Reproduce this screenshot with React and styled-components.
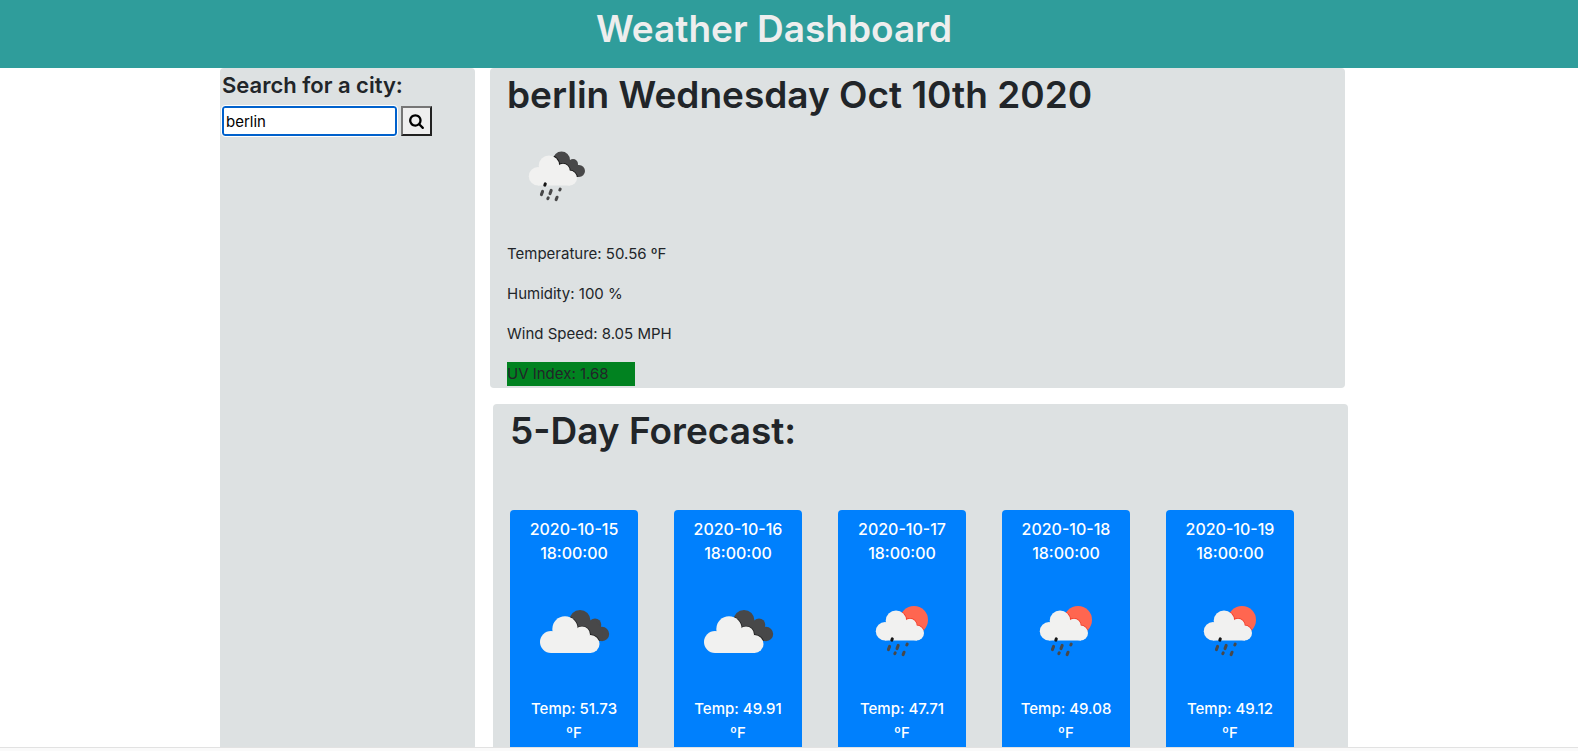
import React, { useState } from "react";
import styled, { createGlobalStyle } from "styled-components";

const colors = {
  teal: "#2f9d9b",
  panel: "#dde1e2",
  ink: "#212529",
  blue: "#0080fd",
  green: "#018220",
  cloud: "#f1f1f0",
  storm: "#484849",
  sun: "#ff6650",
};

const GlobalStyle = createGlobalStyle`
  *, *::before, *::after { box-sizing: border-box; }
  body {
    margin: 0;
    background: #fff;
    color: ${colors.ink};
    font: 400 15px/24px Inter, "Liberation Sans", sans-serif;
  }
  h1, h2, h3, p { margin: 0; }
`;

const Page = styled.div`
  display: flex;
  flex-direction: column;
  height: 100vh;
`;

const Header = styled.header`
  flex: none;
  height: 68px;
  padding: 4px 30px 0 0;
  background: ${colors.teal};
  color: #eee;
  text-align: center;
`;

const Title = styled.h1`
  font-size: 37px;
  font-weight: 600;
  line-height: 50px;
`;

const Content = styled.div`
  flex: 1;
  min-height: 0;
  width: 100%;
  max-width: 1138px;
  margin: 0 auto;
  display: grid;
  grid-template-columns: 255px minmax(0, 858px);
  gap: 15px;
  overflow: hidden;
`;

const Sidebar = styled.aside`
  padding: 2px;
  background: ${colors.panel};
  border-radius: 4px 4px 0 0;
`;

const SearchLabel = styled.label`
  display: block;
  margin-bottom: 6px;
  font-size: 22px;
  font-weight: 600;
  line-height: 30px;
`;

const SearchForm = styled.form`
  display: flex;
  gap: 4px;
`;

const SearchInput = styled.input`
  width: 175px;
  height: 30px;
  padding: 0 2px;
  border: 2px solid #0061cc;
  border-radius: 3px;
  outline: 1px solid #fff;
  background: #fff;
  color: #000;
  font: inherit;
`;

const SearchButton = styled.button`
  display: grid;
  place-items: center;
  width: 31px;
  height: 30px;
  padding: 0;
  border: 2px solid;
  border-color: #767676 #212121 #212121 #767676;
  background: #efefef;
  color: #000;
`;

const Main = styled.main`
  display: flex;
  flex-direction: column;
  gap: 16px;
  min-height: 0;
`;

const Panel = styled.section`
  padding: 2px 17px;
  background: ${colors.panel};
  border-radius: 4px;
`;

const CurrentPanel = styled(Panel)`
  margin-right: 3px;
`;

const ForecastPanel = styled(Panel)`
  display: flex;
  flex: 1;
  flex-direction: column;
  margin-left: 3px;
  padding-bottom: 0;
  border-radius: 4px 4px 0 0;
`;

const PanelTitle = styled.h2`
  margin-bottom: 6px;
  font-size: 37px;
  font-weight: 600;
  line-height: 50px;
`;

const Reading = styled.p`
  margin-top: 16px;
`;

const UvReading = styled(Reading)`
  width: 128px;
  background: ${colors.green};
`;

const Days = styled.div`
  display: grid;
  flex: 1;
  grid-template-columns: repeat(5, 128px);
  gap: 36px;
  margin-top: 48px;
`;

const DayCard = styled.article`
  padding: 7px 14px 0;
  border-radius: 4px 4px 0 0;
  background: ${colors.blue};
  color: #fff;
  text-align: center;
`;

const DayTitle = styled.h3`
  margin-bottom: 16px;
  font-size: 16px;
  font-weight: 500;
  line-height: 24px;
`;

const DayTemp = styled(Reading)`
  font-weight: 500;
`;

const Picture = styled.svg`
  display: block;
  width: 100px;
  height: 100px;
`;

const StatusBar = styled.div`
  flex: none;
  height: 4px;
  border-top: 1px solid #e2e2e2;
  background: #fafafa;
`;

function SmallCloud() {
  return (
    <>
      <circle cx="33" cy="50.3" r="9.2" />
      <circle cx="44" cy="39.7" r="10.3" />
      <circle cx="58" cy="44.5" r="6.7" />
      <circle cx="64.5" cy="52" r="7.5" />
      <path d="M33 44h26l6 8v7.5H33z" />
    </>
  );
}

function Drops() {
  return (
    <g stroke={colors.storm} strokeWidth="3" strokeLinecap="round">
      <path d="M40.3 57.8l-.5 1.4" stroke="#151515" />
      <path d="M37.6 65.4l-1.2 3.2M46.2 64.4l-1.2 3.2M55.2 63.1l-.4.9M43.2 71.8l-.4.8M52.1 71.2l-1 2.4" />
    </g>
  );
}

function BrokenClouds() {
  const front = (
    <>
      <circle cx="27" cy="61" r="11" />
      <circle cx="41" cy="48" r="12.7" />
      <circle cx="58" cy="53.5" r="8" />
      <circle cx="66.5" cy="63" r="9" />
      <path d="M27 53h32l8 9v10H27z" />
    </>
  );
  return (
    <Picture viewBox="0 0 100 100" aria-hidden="true">
      <g fill={colors.storm}>
        <circle cx="56" cy="39.5" r="10.5" />
        <circle cx="71" cy="43.7" r="6.3" />
        <circle cx="78" cy="53" r="7.2" />
        <path d="M56 40h16l7 8-1 12H62z" />
      </g>
      <clipPath id="stormEdge">
        <circle cx="56" cy="39.5" r="10.5" />
        <circle cx="71" cy="43.7" r="6.3" />
        <circle cx="78" cy="53" r="7.2" />
        <path d="M56 40h16l7 8-1 12H62z" />
      </clipPath>
      <g clipPath="url(#stormEdge)" fill="#222" stroke="#222" strokeWidth="1.6">
        {front}
      </g>
      <g fill={colors.cloud}>{front}</g>
    </Picture>
  );
}

function ShowerRain() {
  return (
    <Picture viewBox="2 0 100 100" aria-hidden="true">
      <clipPath id="showerEdge">
        <circle cx="56.5" cy="34" r="8.5" />
        <circle cx="68" cy="38" r="5" />
        <circle cx="74" cy="45" r="6" />
        <path d="M56 34h12l6 7v10H60z" />
      </clipPath>
      <g clipPath="url(#showerEdge)">
        <path fill={colors.storm} d="M0 0h100v100H0z" />
        <g fill="#151515" stroke="#151515" strokeWidth="1.6">
          <SmallCloud />
        </g>
      </g>
      <g fill={colors.cloud}>
        <SmallCloud />
      </g>
      <Drops />
    </Picture>
  );
}

function SunnyRain() {
  return (
    <Picture viewBox="0 0 100 100" aria-hidden="true">
      <clipPath id="sunEdge">
        <circle cx="62" cy="39" r="14" />
      </clipPath>
      <g clipPath="url(#sunEdge)">
        <path fill={colors.sun} d="M0 0h100v100H0z" />
        <g fill="#f03a28" stroke="#f03a28" strokeWidth="1.4">
          <SmallCloud />
        </g>
      </g>
      <g fill={colors.cloud}>
        <SmallCloud />
      </g>
      <Drops />
    </Picture>
  );
}

function SearchIcon() {
  return (
    <svg width="15" height="16" viewBox="0 0 1664 1792" fill="currentColor" aria-hidden="true">
      <path d="M1152 832q0-185-131.5-316.5t-316.5-131.5-316.5 131.5-131.5 316.5 131.5 316.5 316.5 131.5 316.5-131.5 131.5-316.5zm512 832q0 52-38 90t-90 38q-54 0-90-38l-343-342q-179 124-399 124-143 0-273.5-55.5t-225-150-150-225-55.5-273.5 55.5-273.5 150-225 225-150 273.5-55.5 273.5 55.5 225 150 150 225 55.5 273.5q0 220-124 399l343 343q37 37 37 90z" />
    </svg>
  );
}

const forecast = [
  { date: "2020-10-15", temp: "51.73", Icon: BrokenClouds },
  { date: "2020-10-16", temp: "49.91", Icon: BrokenClouds },
  { date: "2020-10-17", temp: "47.71", Icon: SunnyRain },
  { date: "2020-10-18", temp: "49.08", Icon: SunnyRain },
  { date: "2020-10-19", temp: "49.12", Icon: SunnyRain },
];

export default function App() {
  const [city, setCity] = useState("berlin");
  return (
    <Page>
      <GlobalStyle />
      <Header>
        <Title>Weather Dashboard</Title>
      </Header>
      <Content>
        <Sidebar>
          <SearchLabel htmlFor="city">Search for a city:</SearchLabel>
          <SearchForm onSubmit={(event) => event.preventDefault()}>
            <SearchInput id="city" value={city} onChange={(event) => setCity(event.target.value)} />
            <SearchButton type="submit" aria-label="Search">
              <SearchIcon />
            </SearchButton>
          </SearchForm>
        </Sidebar>
        <Main>
          <CurrentPanel>
            <PanelTitle>berlin Wednesday Oct 10th 2020</PanelTitle>
            <ShowerRain />
            <Reading>Temperature: 50.56 ºF</Reading>
            <Reading>Humidity: 100 %</Reading>
            <Reading>Wind Speed: 8.05 MPH</Reading>
            <UvReading>UV Index: 1.68</UvReading>
          </CurrentPanel>
          <ForecastPanel>
            <PanelTitle>5-Day Forecast:</PanelTitle>
            <Days>
              {forecast.map(({ date, temp, Icon }) => (
                <DayCard key={date}>
                  <DayTitle>{date} 18:00:00</DayTitle>
                  <Icon />
                  <DayTemp>Temp: {temp} ºF</DayTemp>
                </DayCard>
              ))}
            </Days>
          </ForecastPanel>
        </Main>
      </Content>
      <StatusBar />
    </Page>
  );
}
